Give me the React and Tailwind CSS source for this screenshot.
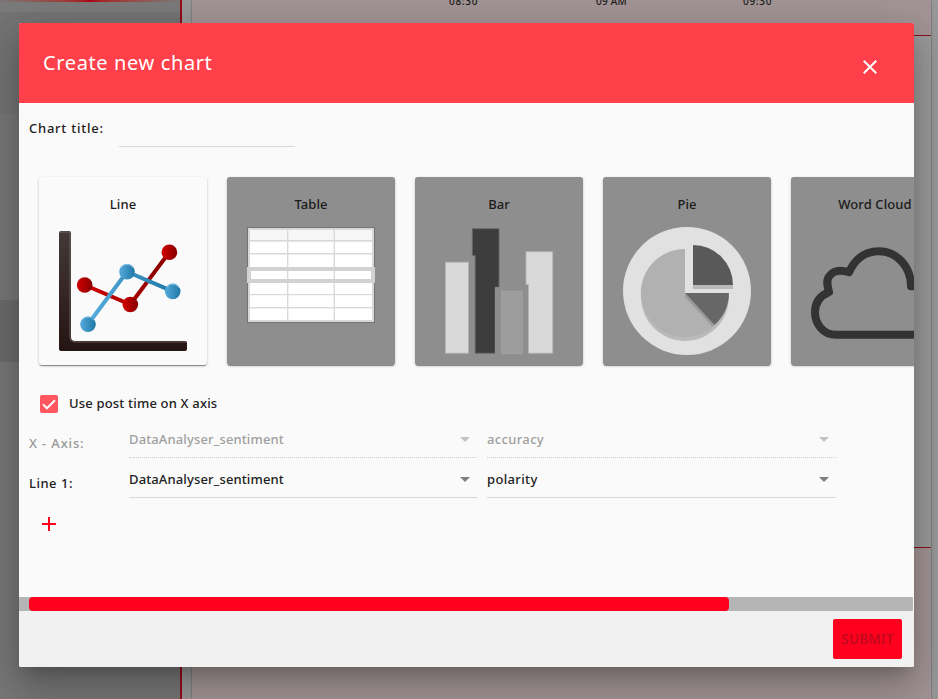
const modalShadow =
  "shadow-[0_11px_15px_-7px_rgba(0,0,0,0.2),0_24px_38px_3px_rgba(0,0,0,0.14),0_9px_46px_8px_rgba(0,0,0,0.12)]";

function Backdrop() {
  return (
    <div className="flex h-[699px] w-[938px] bg-[#999999]">
      <div className="flex w-[182px] shrink-0 flex-col border-r-2 border-[#990a1a] bg-[#787878]">
        <div className="h-0.5 bg-linear-to-r from-[#787878] via-[#a80018] to-[#787878]" />
        <div className="h-2.5 bg-[#7b7b7b]" />
        <div className="h-[102px] bg-[#747474]" />
        <div className="h-[186px]" />
        <div className="h-[62px] bg-[#6c6c6c]" />
      </div>
      <div className="ml-2.5 flex w-[739px] shrink-0 flex-col bg-[#9b9b9b] shadow-[0_0_2px_rgba(0,0,0,0.45)]">
        <div className="h-9 border-b border-[#8b1220] bg-[#a39595]">
          <div className="flex gap-[117px] pl-[257px] font-['Noto_Sans',sans-serif] text-[10px] leading-[10px] font-medium text-[#1c1c1c]">
            <span className="-mt-1 w-[30px] whitespace-nowrap tracking-[0.7px]">08:30</span>
            <span className="-mt-1 w-[30px] whitespace-nowrap tracking-[0.2px]">09 AM</span>
            <span className="-mt-1 w-[30px] whitespace-nowrap tracking-[0.7px]">09:30</span>
          </div>
        </div>
        <div className="h-[511px]" />
        <div className="flex-1 border-t border-[#8b1220] bg-[#a39595]" />
      </div>
    </div>
  );
}

function LineArt() {
  return (
    <svg width="128" height="128" viewBox="0 0 128 128">
      <defs>
        <linearGradient id="axis" x1="0" y1="0" x2="0" y2="1">
          <stop offset="0" stopColor="#443938" />
          <stop offset="1" stopColor="#241512" />
        </linearGradient>
        <linearGradient id="red" x1="0" y1="0" x2="1" y2="0">
          <stop offset="0.1" stopColor="#cc0000" />
          <stop offset="1" stopColor="#850000" />
        </linearGradient>
        <linearGradient id="blue" x1="0" y1="0" x2="1" y2="0">
          <stop offset="0" stopColor="#55aadd" />
          <stop offset="1" stopColor="#1f77a3" />
        </linearGradient>
        <linearGradient id="redLine" gradientUnits="userSpaceOnUse" x1="26" y1="0" x2="111" y2="0">
          <stop offset="0" stopColor="#d20000" />
          <stop offset="1" stopColor="#850000" />
        </linearGradient>
        <linearGradient id="blueLine" gradientUnits="userSpaceOnUse" x1="29" y1="0" x2="114" y2="0">
          <stop offset="0" stopColor="#58addf" />
          <stop offset="1" stopColor="#1f77a3" />
        </linearGradient>
      </defs>
      <path d="M2 4H10Q12 4 12 6V110Q12 114 16 114H126Q128 114 128 116V122Q128 124 126 124H2Q0 124 0 122V6Q0 4 2 4Z" fill="url(#axis)" />
      <path d="M1 6Q1 5 3 5H9Q11 5 11 7V110Q11 115 16 115H127" fill="none" stroke="#756a68" strokeWidth="0.8" />
      <path d="M25.7 58L71.3 77.5L110.5 25" fill="none" stroke="url(#redLine)" strokeWidth="4" />
      <circle cx="25.7" cy="58" r="7.8" fill="url(#red)" />
      <circle cx="71.3" cy="77.5" r="7.8" fill="url(#red)" />
      <circle cx="110.4" cy="25.2" r="7.8" fill="url(#red)" />
      <path d="M29 97.2L68 44.7L113.7 64.4" fill="none" stroke="url(#blueLine)" strokeWidth="4" />
      <g fill="url(#blue)">
        <circle cx="29" cy="97.2" r="7.8" />
        <circle cx="68" cy="44.7" r="7.8" />
        <circle cx="113.7" cy="64.4" r="7.8" />
      </g>
      <g fill="none" stroke="#8ac8ea" strokeWidth="0.8">
        <path d="M23 93.5A7 7 0 0 1 35 93.5M62 41A7 7 0 0 1 74 41M107.7 60.7A7 7 0 0 1 119.7 60.7" />
      </g>
    </svg>
  );
}

function TableArt() {
  return (
    <svg width="128" height="128" viewBox="0 0 128 128">
      <rect x="0.5" y="0.5" width="127" height="95" fill="#d8d8d8" stroke="#747474" />
      <rect x="2" y="2" width="124" height="92" fill="#d8d8d8" />
      <rect x="3" y="3" width="122" height="90" fill="#fff" />
      <rect x="3" y="3" width="122" height="11" fill="#f6f6f6" />
      <g fill="#d9d9d9">
        <rect x="3" y="13" width="122" height="1.7" />
        <rect x="3" y="26" width="122" height="1.5" />
        <rect x="3" y="67" width="122" height="1.2" />
        <rect x="3" y="80" width="122" height="1.4" />
        <rect x="40" y="3" width="1.4" height="90" />
        <rect x="86.6" y="3" width="1.4" height="90" />
      </g>
      <path d="M0 40H128V56H0ZM4 44V52H124V44Z" fill="#d2d2d2" fillRule="evenodd" />
    </svg>
  );
}

function BarArt() {
  return (
    <svg width="128" height="128" viewBox="0 0 128 128">
      <g strokeWidth="0.8">
        <rect x="10.4" y="35.2" width="23" height="91" fill="#d9d9d9" stroke="#b5b5b5" />
        <path d="M37.4 1.7H64V60H60V126.2H40.2V28.400H37.4Z" fill="#3d3d3d" stroke="#666" />
        <path d="M60 60.5H91V57H88V126.5H60Z" fill="#8e8e8e" stroke="none" />
        <rect x="66.5" y="64" width="20.8" height="62.4" fill="#9d9d9d" stroke="#a3a3a3" />
        <path d="M91 24.700H117.7V126.2H93.5V57.500H91Z" fill="#d9d9d9" stroke="#b5b5b5" />
      </g>
    </svg>
  );
}

function PieArt() {
  return (
    <svg width="128" height="128" viewBox="0 0 128 128">
      <circle cx="64" cy="64" r="64" fill="#e1e1e1" />
      <path d="M62 26V70H106A44 44 0 1 1 62 26Z" fill="#bababa" />
      <path d="M62 22V66L91.5 98.5A44 44 0 1 1 62 22Z" fill="#b1b1b1" />
      <path d="M62 66L91.5 98L89.5 99.6L62 70Z" fill="#999" />
      <path d="M62 66H106A44 44 0 0 1 91.5 98Z" fill="#676767" />
      <rect x="70" y="58" width="40" height="4" fill="#b9b9b9" />
      <path d="M70 18A40 40 0 0 1 110 58H70Z" fill="#595959" />
    </svg>
  );
}

function CloudArt() {
  return (
    <svg width="128" height="128" viewBox="0 0 128 128">
      <path
        d="M18 45.2C16 38 15 33 18.5 29C23 23 30 23 38 25.5C45 10 56 4.5 68 4.5C86 4.5 100 20 100 39.5H105C117 41 124 53 124 64C124 78 115 88 102 88H25C12 88 4 77 4 65.5C4 56 9 49 18 45.2"
        transform="translate(0 19.8)"
        fill="none"
        stroke="#333"
        strokeWidth="8"
        strokeLinejoin="round"
        strokeLinecap="round"
      />
    </svg>
  );
}

const charts = [
  { name: "Line", art: <LineArt />, active: true },
  { name: "Table", art: <TableArt /> },
  { name: "Bar", art: <BarArt /> },
  { name: "Pie", art: <PieArt /> },
  { name: "Word Cloud", art: <CloudArt /> },
];

function ChartCard({ name, art, active }) {
  return (
    <div
      className={`flex h-[188px] w-[168px] shrink-0 flex-col items-center rounded-[3px] shadow-[0_1px_3px_rgba(0,0,0,0.2),0_1px_1px_rgba(0,0,0,0.14),0_2px_1px_-1px_rgba(0,0,0,0.3)] ${
        active ? "bg-[#fafafa]" : "bg-[#8e8e8e]"
      }`}
    >
      <div className="mt-[17px] h-[33px] text-[13px] leading-5 font-medium tracking-[0.1px] whitespace-nowrap text-[#1b1b1b]">{name}</div>
      {art}
    </div>
  );
}

function Select({ value, disabled, tracking }) {
  return (
    <div
      className={`flex h-[30px] justify-between border-b pt-[1px] ${
        disabled ? "border-dotted border-[#cecece] text-[#9f9f9f]" : "border-[#d8d8d8] text-[#212121]"
      }`}
    >
      <span className={`leading-5 ${tracking}`}>{value}</span>
      <svg width="10" height="5" viewBox="0 0 10 5" className="mt-2 mr-[7px]">
        <path d="M0 0H10L5 5Z" fill={disabled ? "#c3c3c3" : "#808080"} />
      </svg>
    </div>
  );
}

function AxisRow({ label, source, field, disabled }) {
  return (
    <div className="grid h-10 grid-cols-[100px_348px_349px] pl-2.5">
      <div className={`pt-[5px] leading-5 ${disabled ? "tracking-[0.85px] text-[#979797]" : "tracking-[0.5px] text-[#212121]"}`}>{label}</div>
      <Select value={source} disabled={disabled} tracking="tracking-[0.13px]" />
      <div className="ml-2.5 w-[349px]">
        <Select value={field} disabled={disabled} tracking="tracking-[0.35px]" />
      </div>
    </div>
  );
}

function Dialog() {
  return (
    <div className={`flex h-[644px] w-[895px] flex-col overflow-hidden rounded-[2px] bg-[#fafafa] text-[13px] font-medium text-[#212121] ${modalShadow}`}>
      <header className="flex h-20 shrink-0 justify-between bg-[#ff3f49] pr-[37px] pl-6 text-white">
        <h1 className="mt-[26px] text-[20px] leading-7 font-normal tracking-[0.62px]">Create new chart</h1>
        <svg width="14" height="14" viewBox="0 0 14 14" className="mt-[37px]">
          <path d="M0.7 0.7L13.3 13.3M13.3 0.7L0.7 13.3" stroke="#fff" strokeWidth="2" />
        </svg>
      </header>
      <main className="flex flex-1 flex-col overflow-hidden">
        <div className="flex h-[74px] shrink-0 pl-2.5">
          <label className="w-[90px] pt-[15px] leading-5 tracking-[0.75px]">Chart title:</label>
          <div className="h-11 w-44 border-b border-[#d8d8d8]" />
        </div>
        <div className="flex h-[208px] shrink-0 gap-5 pl-5">
          {charts.map((c) => (
            <ChartCard key={c.name} {...c} />
          ))}
        </div>
        <div className="flex h-[43px] shrink-0 items-start gap-[11px] pt-[7px] pl-[21px]">
          <div className="mt-[3px] flex size-[18px] items-center justify-center rounded-[2px] bg-[#ff5660]">
            <svg width="14" height="11" viewBox="0 0 14 11">
              <path d="M1 5.4L4.9 9.3L13 1.2" fill="none" stroke="#fafafa" strokeWidth="2" />
            </svg>
          </div>
          <span className="mt-[1px] leading-5 tracking-[0.18px]">Use post time on X axis</span>
        </div>
        <AxisRow label="X - Axis:" source="DataAnalyser_sentiment" field="accuracy" disabled />
        <AxisRow label="Line 1:" source="DataAnalyser_sentiment" field="polarity" />
        <div className="pt-[9px] pl-[23px]">
          <svg width="14" height="14" viewBox="0 0 14 14">
            <path d="M0 7H14M7 0V14" stroke="#ff001e" strokeWidth="2" />
          </svg>
        </div>
      </main>
      <div className="mr-px h-3.5 shrink-0 bg-[#b5b5b5] pl-2.5">
        <div className="h-3.5 w-[700px] rounded-[4px] bg-[#ff001e]" />
      </div>
      <footer className="flex h-14 shrink-0 justify-end bg-[#f1f1f1] pt-2 pr-3">
        <div className="flex h-10 w-[69px] items-center justify-center rounded-[2px] bg-[#ff001e] text-[13.5px] tracking-[0.25px] text-[#b90b1d]">
          SUBMIT
        </div>
      </footer>
    </div>
  );
}

export default function App() {
  return (
    <div className="relative h-[699px] w-[938px] overflow-hidden font-['Noto_Sans',sans-serif]">
      <Backdrop />
      <div className="absolute inset-0 flex items-start pt-[23px] pl-[19px]">
        <Dialog />
      </div>
    </div>
  );
}
